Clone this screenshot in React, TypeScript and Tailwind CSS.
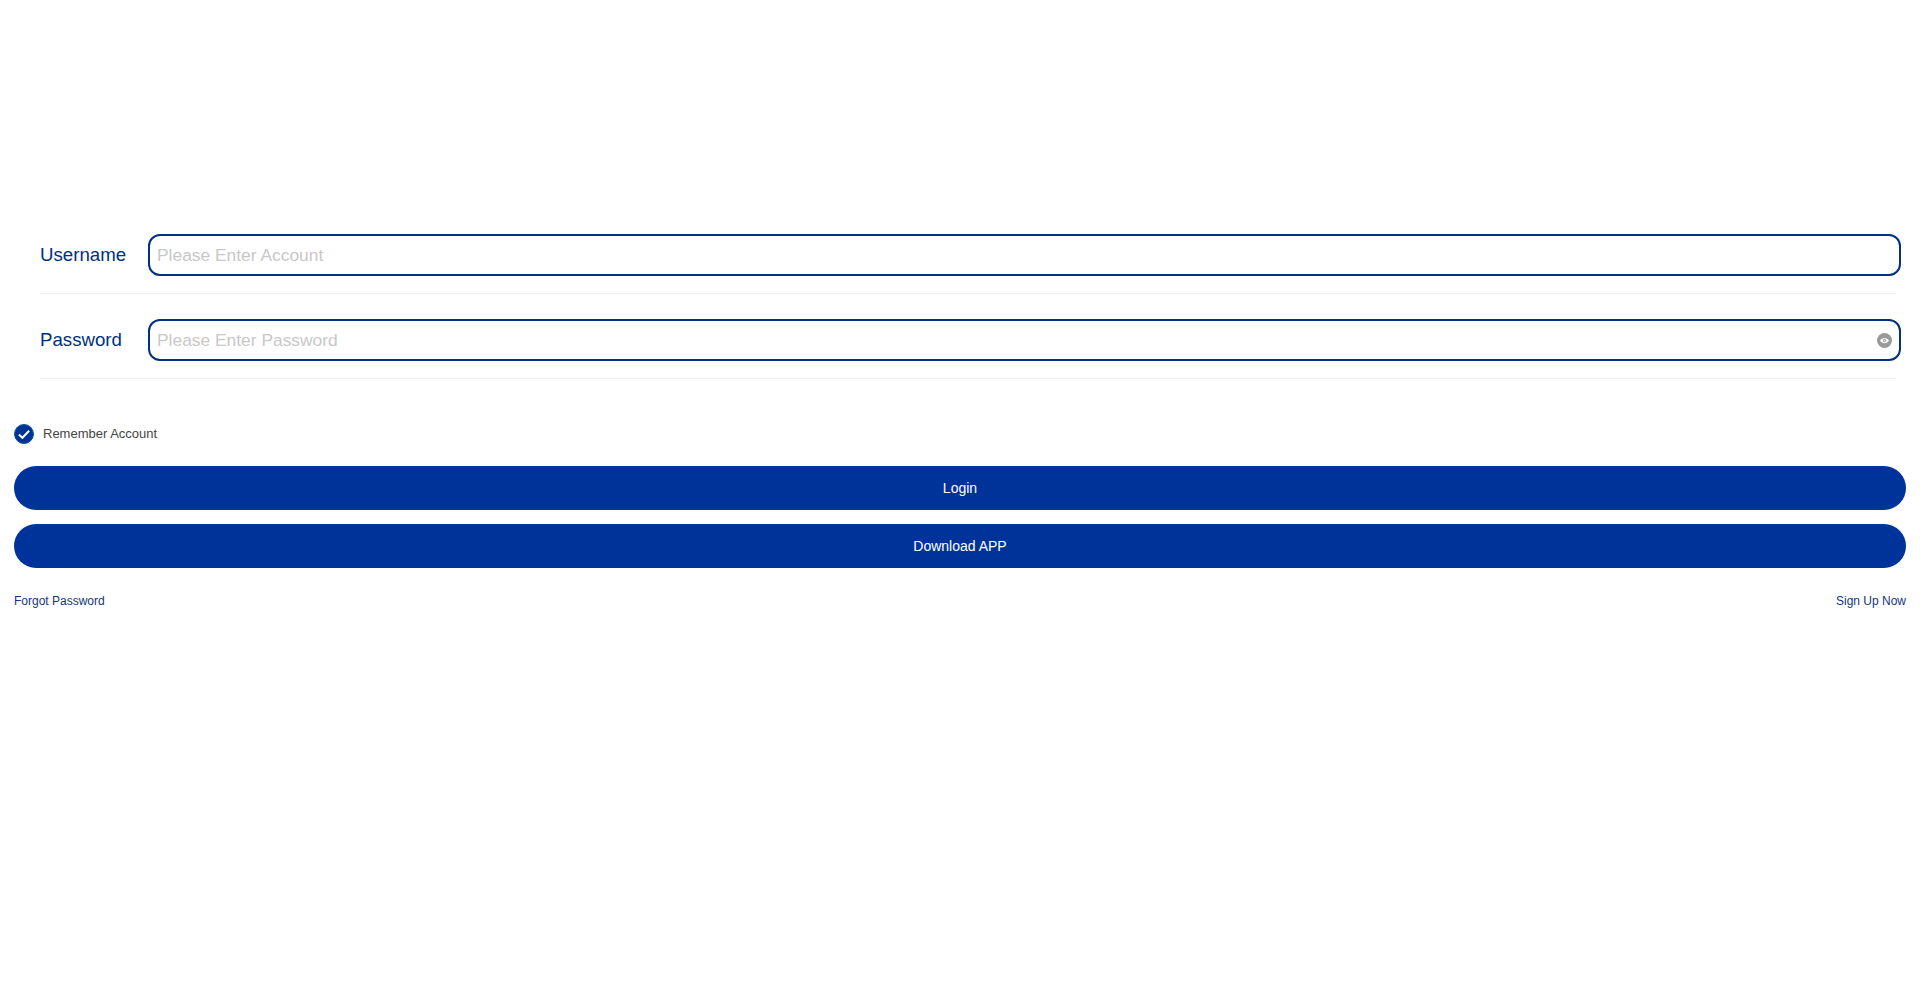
import React from "react";

function Eye() {
  return (
    <svg width="15" height="15" viewBox="0 0 16 16" className="shrink-0">
      <circle cx="8" cy="8" r="8" fill="#999999" />
      <path d="M3.2 8C4.3 6.2 6 5.2 8 5.2S11.7 6.2 12.8 8C11.7 9.8 10 10.8 8 10.8S4.3 9.8 3.2 8Z" fill="#ffffff" />
      <circle cx="8" cy="8" r="1.8" fill="#999999" />
      <circle cx="8" cy="8" r="0.9" fill="#ffffff" />
    </svg>
  );
}

function Field({ label, placeholder, eye }: { label: string; placeholder: string; eye?: boolean }) {
  return (
    <div className="flex items-center border-b border-[#f0f0f0] pb-[17px] pt-[25px]">
      <label className="w-[108px] shrink-0 text-[18.67px] text-[#00307f]">{label}</label>
      <div className="mr-[-5px] flex h-[42px] flex-1 items-center rounded-[12px] border-[2px] border-[#00307f] pl-[7px] pr-[7px]">
        <input
          placeholder={placeholder}
          className="min-w-0 flex-1 bg-transparent text-[17.4px] outline-none placeholder:text-[#c8c8c8]"
        />
        {eye && <Eye />}
      </div>
    </div>
  );
}

export default function App() {
  return (
    <div className="min-h-[993px] bg-white font-['Liberation_Sans',Arial,sans-serif]">
      <div className="px-[14px] pt-[209px]">
        <div className="pl-[26px] pr-[10px]">
          <Field label="Username" placeholder="Please Enter Account" />
          <Field label="Password" placeholder="Please Enter Password" eye />
        </div>
        <div className="mt-[44px] flex h-[22px] items-center gap-[9px]">
          <span className="flex h-[20px] w-[20px] items-center justify-center rounded-full border border-[#0a5c8a] bg-[#003399]">
            <svg width="16" height="16" viewBox="0 0 14 14" fill="none">
              <path d="M2.5 7.4 5.6 10.3 11.5 4.2" stroke="#ffffff" strokeWidth="1.7" />
            </svg>
          </span>
          <span className="text-[13px] text-[#444444]">Remember Account</span>
        </div>
        <button className="mt-[21px] flex h-[44px] w-full items-center justify-center rounded-full bg-[#003399] text-[14px] text-white">
          Login
        </button>
        <button className="mt-[14px] flex h-[44px] w-full items-center justify-center rounded-full bg-[#003399] text-[14px] text-white">
          Download APP
        </button>
        <div className="mt-[24px] flex items-center justify-between text-[12px] text-[#12357f]">
          <a>Forgot Password</a>
          <a>Sign Up Now</a>
        </div>
      </div>
    </div>
  );
}
